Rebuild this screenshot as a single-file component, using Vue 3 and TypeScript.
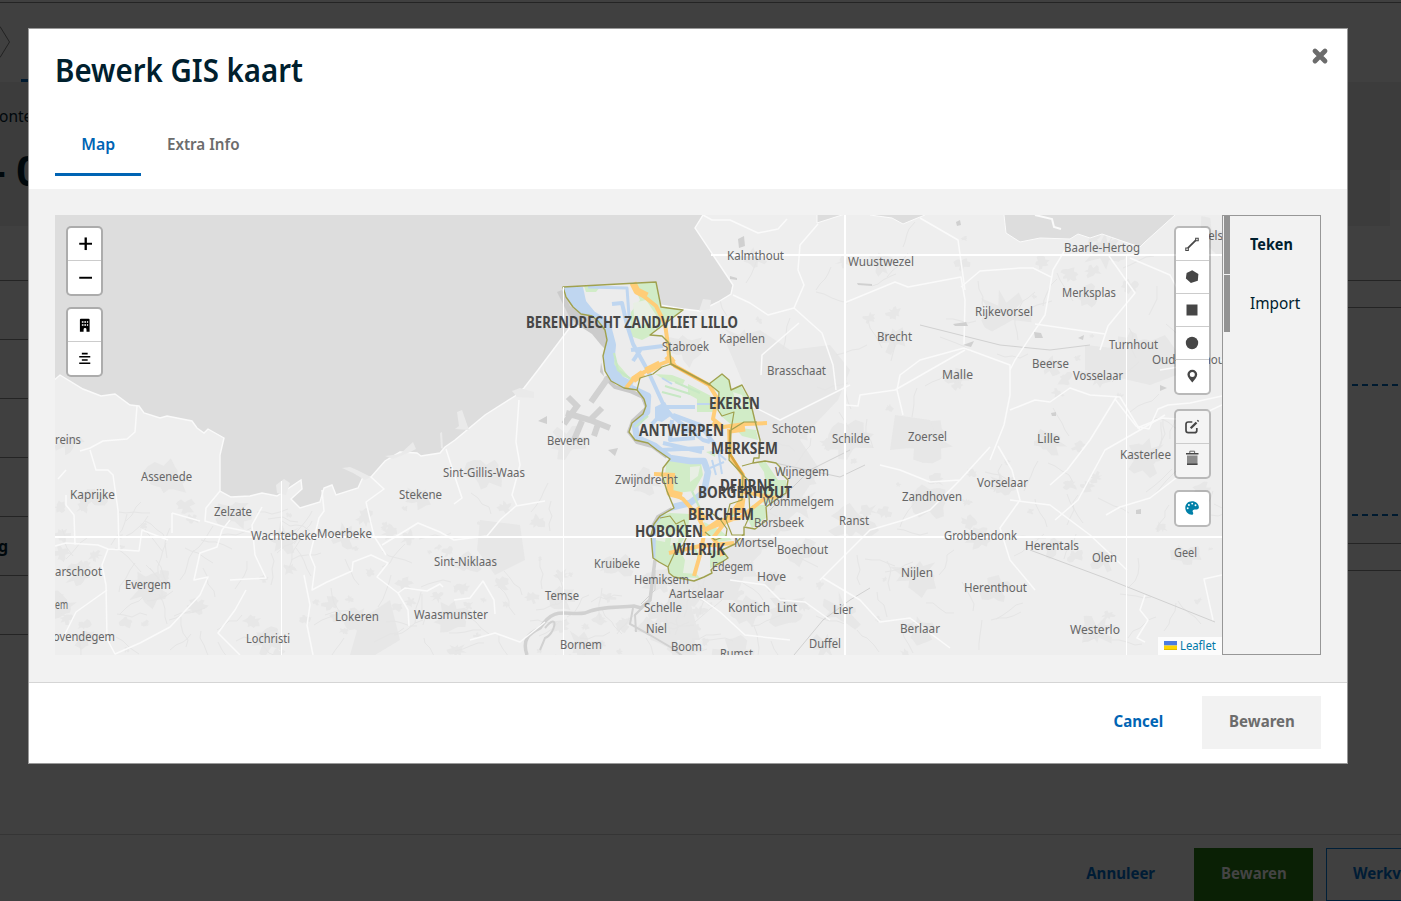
<script setup lang="ts">
interface MapLabel { name: string; x: number; y: number; w: number }

const parseLabels = (source: string): MapLabel[] =>
  source.split(';').map((entry) => {
    const [name, x, y, w] = entry.trim().split('|')
    return { name, x: Number(x), y: Number(y), w: Number(w) }
  })

const towns = parseLabels(`Kalmthout|727|260|57;Wuustwezel|848|266|66;Baarle-Hertog|1064|252|76;Merksplas|1062|297|54;
Rijkevorsel|975|316|58;Brecht|877|341|35;Kapellen|719|343|46;Stabroek|662|351|47;Brasschaat|767|375|59;Malle|942|379|31;
Beerse|1032|368|37;Vosselaar|1073|380|50;Turnhout|1109|349|49;Oud-Turnhout|1152|364|77;Schoten|772|433|44;Schilde|832|443|38;
Zoersel|908|441|39;Lille|1037|443|23;Kasterlee|1120|459|51;Geel|1174|557|23;Ravels|1189|240|34;Beveren|547|445|43;
Zwijndrecht|615|484|63;Wijnegem|775|476|54;Wommelgem|763|506|71;Borsbeek|754|527|50;Ranst|839|525|30;Mortsel|734|547|43;
Boechout|777|554|51;Edegem|712|571|41;Hove|757|581|29;Kruibeke|594|568|46;Hemiksem|634|584|55;Aartselaar|669|598|55;
Temse|545|600|34;Schelle|644|612|38;Kontich|728|612|42;Lint|777|612|20;Lier|833|614|20;Niel|646|633|21;Boom|671|651|31;
Bornem|560|649|42;Rumst|720|658|33;Duffel|809|648|32;Sint-Gillis-Waas|443|477|82;Stekene|399|499|43;Assenede|141|481|51;
Kaprijke|70|499|45;Zelzate|214|516|38;Wachtebeke|251|540|66;Moerbeke|317|538|55;Sint-Niklaas|434|566|63;reins|55|444|26;
arschoot|55|576|47;Evergem|125|589|46;em|55|609|13;ovendegem|53|641|62;Lokeren|335|621|44;Lochristi|246|643|44;
Waasmunster|414|619|74;Vorselaar|977|487|51;Zandhoven|902|501|60;Grobbendonk|944|540|73;Herentals|1025|550|54;Olen|1092|562|25;
Nijlen|901|577|32;Herenthout|964|592|63;Berlaar|900|633|40;Westerlo|1070|634|50`)

const districts = parseLabels(`BERENDRECHT ZANDVLIET LILLO|526|328|212;EKEREN|709|409|51;ANTWERPEN|639|436|85;MERKSEM|711|454|67;
DEURNE|720|491|55;BORGERHOUT|698|498|94;BERCHEM|688|520|66;HOBOKEN|635|537|68;WILRIJK|673|555|52`)

// Small deterministic generator so built-up areas look irregular but stable.
let seed = 17
const rnd = (): number => {
  seed = (seed * 16807) % 2147483647
  return seed / 2147483647
}
const blob = (cx: number, cy: number, r: number): string => {
  const pts: string[] = []
  for (let i = 0; i < 18; i++) {
    const a = (i / 18) * Math.PI * 2
    const d = r * (0.35 + rnd() * 0.8)
    pts.push(`${(cx + Math.cos(a) * d * 1.2).toFixed(1)},${(cy + Math.sin(a) * d).toFixed(1)}`)
  }
  return pts.join(' ')
}
const builtUp: string[] = towns.map((t) => blob(t.x + t.w / 2, t.y - 2, 10 + rnd() * 12))
for (let i = 0; i < 150; i++) {
  const x = 60 + rnd() * 1160
  const coast = x < 560 ? 500 : x < 720 ? 560 : 235
  builtUp.push(blob(x, coast + rnd() * (655 - coast), 2 + rnd() * 7))
}
const lanes: string[] = []
for (let i = 0; i < 190; i++) {
  let x = 60 + rnd() * 1160
  const coast = x < 560 ? 500 : x < 720 ? 590 : 225
  let y = coast + rnd() * (655 - coast)
  let d = `M${x.toFixed(0)} ${y.toFixed(0)}`
  const a = rnd() * 6.28
  for (let k = 0; k < 4; k++) {
    x += Math.cos(a + rnd() * 0.9) * 8
    y += Math.sin(a + rnd() * 0.9) * 8
    d += `L${x.toFixed(0)} ${y.toFixed(0)}`
  }
  lanes.push(d)
}

const sea = 'M45 205H703V215L695 228 715 258 733 285 731 294 718 302 700 311 683 309 660 305 640 320 590 325 571 326 538 370 524 388 515 396 485 415 455 440 445 447 440 453 421 456 417 453 400 452 385 461 371 477 363 477 358 488 336 495 332 485 324 488 320 502 300 508 291 499 302 489 301 480 277 496 262 493 250 496 231 497 220 491 220 455 224 438 208 429 204 433 197 428 192 421 167 416 160 418 144 413 139 406 130 405 115 394 101 396 83 389 60 375 45 388Z'
const roads = [
  'M137 406L135 432 127 439 103 441 90 448 80 451M90 450L96 470 108 470 113 475 118 510 119 550M66 470L58 479M66 495L66 505 74 515 75 545M55 546L66 543 98 545 108 549 139 551 142 530 168 540M108 549L102 565 106 585 107 639 115 654 140 643 170 627 200 595 208 577 194 580 200 553 217 547 222 530 230 520',
  'M107 590L76 612 65 634M172 513V533M172 513L200 521M220 491L206 508 205 521 225 527 250 532M262 507L252 525 255 555 266 578 230 580M322 490L324 511 319 518 310 555 315 567 312 590 327 582 352 571 353 562 371 555 388 563 377 577 398 593 408 610 409 626',
  'M371 477L384 489 366 502 374 536 386 555M382 545L418 523 440 532 454 540 487 536 501 519 516 506 545 501M519 400L516 442 520 465 512 495 517 506M446 449L454 474 462 498 454 504M398 593L405 588 427 591 440 584 443 587M454 600L470 598 483 581 494 600 495 614M304 575L310 605 307 625 313 655',
  'M733 295L750 303 768 315 794 308 822 333 833 365 836 390M844 303L895 282 908 287 961 277 965 300 964 345M703 215L712 220 730 220 758 233 778 229 787 219M818 224L800 245 798 270 804 285 794 308M799 323L762 355 761 375M920 218L958 240 965 290M961 287L980 271 1020 268 1033 268 1051 277',
  'M1065 250L1053 270 1045 315 1015 360 1010 370M1035 324L1105 334M964 348L1010 365 1010 395 1004 425 990 460M964 348L920 360 900 375 897 390 903 415M965 350L895 390 860 395 858 406 845 405M1109 256L1135 293 1108 326 1100 350M1130 258L1170 275 1178 290M1010 410L1035 400 1050 402 1070 388 1090 395 1120 397 1140 430 1165 415',
  'M1117 396L1090 440 1067 470 1050 485M1140 430L1105 450 1078 500 1055 520M990 447L960 480 930 482 900 470 880 465M998 446L1012 470 1020 500 1000 528 1010 560 1035 590M960 480L930 510 904 520 870 530 840 560 820 580M1222 405L1190 420 1162 418 1137 428M1222 360L1160 370',
  'M1115 399L1136 426 1149 429 1158 409 1168 405 1190 403 1222 396M1106 515L1120 507 1150 498 1176 478M1145 595L1140 610 1148 620 1137 638 1145 642M1222 575L1204 579 1213 620M823 578L860 600 880 622 910 618 950 648M730 580L765 585 780 600 805 602 830 620M690 590L720 612 745 635 790 640M630 340L720 390 780 420 850 385M470 640L495 633 520 642 545 622M240 655L218 633 235 610 246 590M1010 500L1050 505 1090 535 1127 570',
]
const riverBank = 'M563 287L566 297 573 307 581 314 592 316 598 321 605 330 607 340 603 356 605 371 611 381 624 388 637 390 644 399 646 406 643 414 632 423 629 432 635 440 648 443 657 450 670 459 663 468 662 475 667 491 674 508 660 516 654 524 651 535 653 558 659 562 668 567 669 573 674 577 684 579 694 581 704 577 712 573 711 570 716 565 722 562 728 558 722 550 735 544 744 534 744 527 755 529 767 520 766 507 778 498 786 493 788 480 782 474 780 467 776 463 765 461 753 463 754 458 759 458 760 440 755 421 750 400 742 385 731 390 729 380 722 374 709 384 671 364 669 344 668 342 662 336 650 335 671 319 683 310 668 308 661 307 656 282 600 285Z'
const borders = 'M637 390L640 378 653 374 662 367 671 364M709 384L719 392 718 410 722 416 734 412 731 430 744 422 757 422M731 430L729 460 743 475 742 500 730 504 726 520 732 535 745 535M742 466L753 463M743 475L750 482 749 496 750 515 745 526M660 518L670 516 676 524 684 520 688 534 683 545 675 552 668 567M705 532L715 540 726 536 727 529 720 519 710 512'
const fieldLines = [0, 1, 2, 3, 4, 5, 6]
</script>

<template>
  <div class="screen">
    <div class="page">
      <div class="steps">
        <svg class="chevron" viewBox="0 0 12 32"><path d="M0 .5L9.5 16 0 31.5" /></svg>
        <span class="step-mark"></span>
      </div>
      <div class="page-head">
        <div class="crumb">onte</div>
        <div class="page-title">- 0</div>
        <div class="head-tab"></div>
      </div>
      <div class="page-body">
        <div class="left-rows">
          <div v-for="n in fieldLines" :key="n" class="row"><b v-if="n === 5">g</b></div>
        </div>
        <div class="right-rows">
          <div class="cell first"></div>
          <div class="cell thin"></div>
          <div class="cell drop"></div>
          <div class="cell drop-two"></div>
          <div class="cell gap"></div>
          <div class="cell thin"></div>
        </div>
      </div>
      <div class="page-foot">
        <span class="link"><span class="cond">Annuleer</span></span>
        <span class="green"><span class="cond">Bewaren</span></span>
        <span class="outline"><span class="cond">Werkvoorraad</span></span>
      </div>
    </div>

    <section class="modal">
      <header class="head">
        <div class="title-row">
          <h1><span class="cond">Bewerk GIS kaart</span></h1>
          <svg class="close" viewBox="0 0 18 18"><path d="M4 4l10 10M14 4L4 14" /></svg>
        </div>
        <nav class="tabs">
          <a class="tab active"><span class="cond">Map</span></a>
          <a class="tab"><span class="cond">Extra Info</span></a>
        </nav>
      </header>

      <div class="body">
        <div class="map">
          <svg class="canvas" viewBox="55 215 1167 440">
            <defs><clipPath id="city"><path :d="riverBank" /></clipPath></defs>
            <rect x="55" y="215" width="1167" height="440" fill="#eee" />
            <g fill="#e7e7e7">
              <polygon v-for="(p, i) in builtUp" :key="i" :points="p" />
              <path d="M725 340L760 330 790 350 830 345 850 370 838 400 800 440 820 470 800 500 750 560 735 600 690 600 700 640 660 640 670 590 730 540 760 500 750 400ZM480 520L520 525 525 560 495 575 477 550ZM360 620L390 600 400 640 375 655H350ZM1085 345L1130 350 1165 335 1190 370 1150 385 1085 370ZM895 415L930 420 940 445 890 450Z" />
            </g>
            <path v-for="(d, i) in lanes" :key="'l' + i" :d="d" fill="none" stroke="#e5e5e5" stroke-width="1" />
            <path :d="sea" fill="#ddd" stroke="#fafafa" stroke-width="1.4" />
            <path d="M817 205V223L845 214V205ZM870 205V215L892 218 903 224 915 219 925 215V205ZM1004 205V215L1006 233 1020 242 1040 238 1070 239 1078 234 1090 238 1102 234 1125 242 1140 247 1145 242 1175 215V205Z" fill="#ddd" stroke="#fafafa" />
            <path d="M1035 215L1052 219 1054 227 1061 229" fill="none" stroke="#fafafa" stroke-width="2" />
            <path d="M342 468L350 467 357 470 371 477 365 480 353 473ZM385 456L400 454 413 442 416 449 408 453 393 459ZM441 448L440 433 442 432 443 449ZM457 412L462 410 469 430 455 429 459 426ZM512 391L520 388 534 392 534 398 517 397ZM276 485L284 479 290 483 286 495 277 493ZM699 311L703 299 711 300 710 309Z" fill="#eaeaea" />
            <path d="M557 292L562 290 570 306 582 315 600 320 607 332 606 350 601 345 592 334 578 325 570 318ZM603 345L601 362 604 376 613 386 600 372ZM637 390L648 397 655 408 645 418 636 422 646 408Z" fill="#cbcbcb" />
            <path d="M605 377L615 387 630 391 643 397 647 408 633 421 629 432 637 442 652 446 667 457M672 509L658 517 652 528" fill="none" stroke="#c9c9c9" stroke-width="4" />
            <g fill="none" stroke="#d1d1d1">
              <path d="M608 378L591 402M566 413L590 420 610 428M582 421L574 440M568 397L577 406 564 424M590 420L602 408M598 424L594 436" stroke-width="6" />
              <path d="M527 655C522 640 528 634 540 628 555 605 565 616 585 613 600 606 620 608 634 606L641 608 650 600 655 560" stroke-width="3.5" />
              <path d="M633 608L630 624 650 635 672 648 685 658M642 608L635 615 636 632M545 628C560 610 555 635 545 638L540 650" stroke-width="2" />
              <path d="M655 570V590L641 604M794 655L823 620 850 600 870 588M1030 550L1105 578 1215 622M920 325L1000 345 1050 350 1090 345M770 510L810 470 850 450M775 463L840 477 865 465" stroke-width="1" />
            </g>
            <g fill="none" stroke="#fafafa" stroke-width="1.5" stroke-linejoin="round">
              <path v-for="d in roads" :key="d" :d="d" />
            </g>
            <path d="M738 239L744 236 745 246 739 248ZM730 276L737 278 737 280 730 279ZM956 222L960 220 961 225 957 226ZM857 283L872 284 872 286 858 285ZM953 324L966 322 968 326 955 326ZM963 345L974 341 971 347ZM1034 332L1041 333 1043 338 1035 338ZM1051 413L1056 412 1056 416 1052 416ZM1160 385L1167 388 1160 391ZM538 421L547 416 547 424ZM608 450L618 448 615 456ZM1136 510L1141 509 1141 514 1136 514ZM1078 338L1084 335 1083 340Z" fill="#d0d0d0" />

            <path :d="riverBank" fill="#ececec" />
            <g clip-path="url(#city)">
              <g fill="#d1ecc7">
                <path d="M632 281L658 281 663 306 690 308 665 325 652 335 642 340 630 336 631 312 640 300Z" />
                <path d="M584 286L600 287 596 292 586 292ZM605 350L618 364 630 378 612 376ZM655 374L672 375 685 380 683 384 665 380ZM688 384L711 396 716 412 697 412 697 399 688 394ZM709 384L722 372 740 384 755 410 758 422 735 428 720 415 719 394Z" />
                <path d="M667 459L701 463 703 475 694 491 676 493 664 482ZM651 518L670 513 690 514 687 534 678 548 688 565 700 578 670 577 651 555ZM758 463L765 461 778 480 786 480 787 491 765 505 757 494 766 486 764 472ZM752 505L765 505 766 518 752 528 748 520ZM704 522L720 530 732 540 718 542 706 536ZM710 550L728 552 724 562 710 568ZM734 427L756 430 758 440 742 436ZM706 452L716 450 715 457Z" />
              </g>
              <g fill="#e8efe4"><path d="M633 303L646 300 656 315 656 330 648 323 635 329ZM690 467L700 466 698 476 690 482ZM655 530L667 528 665 542 655 540ZM672 532L680 530 678 542 670 546ZM685 560L697 560 698 574 683 573ZM733 392L742 395 746 408 737 405Z" /></g>
              <g fill="none" stroke="#bfd6f0" stroke-linejoin="round">
                <path d="M570 287L576 300 590 317 604 326 609 345 607 366 618 382 631 388" stroke-width="14" />
                <path d="M631 388L648 396 647 412 635 426 637 438 655 446 670 458 690 461 704 461 708 472 704 492 690 503 665 509 653 523 652 560" stroke-width="6.5" />
                <path d="M588 287L627 288 629 316" stroke-width="3" />
                <path d="M612 304L622 303 627 325 633 344 648 371 665 408 673 417 703 440 710 442M631 350L663 346M633 361L641 349M664 407L695 407M665 410L652 424M672 420L670 440 695 438M681 432L697 430M663 443L702 452M673 415L700 425 715 445M660 450L704 448" stroke-width="4" />
                <path d="M712 448L726 460M712 460L716 475M718 450L722 474M710 453L724 450M710 468L724 462M697 404L718 404M662 378L672 384" stroke-width="2" />
              </g>
              <path d="M562 286L583 287 589 315 574 310Z" fill="#bfd6f0" /><path d="M655 407L665 402 672 415 662 422 655 420Z" fill="#bfd6f0" />
              <g fill="none" stroke="#c7e8c4" stroke-width="2.2"><path d="M665 386L690 394M675 382L700 393M662 392L681 397M614 353L618 370 632 380M635 427L648 416M692 491L705 520M693 545L699 558M725 520L742 510" /></g>
            </g>
            <g fill="none" stroke="#ffcd78" stroke-linejoin="round">
              <path d="M634 288L646 298 656 306 665 324 667 338 669 356 675 366 709 385 717 398 713 419 723 427 745 424 767 423M674 359L653 367 634 378 626 388M729 429L730 456 743 475 741 500 726 521 713 538 718 545 722 556M654 474L675 475M669 475V491L683 499 697 515 705 530 700 555 694 576M705 530L720 520 740 518 765 498M702 532L710 528 736 518M669 553L700 546 734 543M744 492L776 498" stroke-width="4" />
              <path d="M633 283L637 291 647 296M667 356L673 363M633 380L643 373M646 371L660 364M713 422L722 429M730 430L745 428M670 477V493L682 496M696 508L704 520M742 498L740 513" stroke-width="7" />
            </g>
            <path d="M671 364L710 385M730 430L730 454 743 475" fill="none" stroke="#d7a33e" stroke-width="2.5" />
            <path :d="riverBank" fill="none" stroke="#a0a14f" stroke-width="1.4" stroke-linejoin="round" />
            <path :d="borders" fill="none" stroke="#a0a14f" stroke-width="1.2" stroke-linejoin="round" />

            <g stroke="#fff" fill="none">
              <path d="M563.500 287V655M281.500 481V655M1126.500 256V655" stroke-width="1" />
              <path d="M845 215V655M55 537H1222M711 255H1222" stroke-width="2" />
            </g>
            <g class="towns">
              <text v-for="t in towns" :key="t.name" :x="t.x" :y="t.y" :textLength="t.w" lengthAdjust="spacingAndGlyphs">{{ t.name }}</text>
            </g>
            <g class="districts">
              <text v-for="t in districts" :key="t.name" :x="t.x" :y="t.y" :textLength="t.w" lengthAdjust="spacingAndGlyphs">{{ t.name }}</text>
            </g>
          </svg>

          <div class="controls left">
            <div class="bar">
              <a><svg viewBox="0 0 16 16"><path d="M9 1.500V14.500" stroke="#000" stroke-width="2.400" /><path d="M2.300 8H15.700" stroke="#000" stroke-width="2" /></svg></a>
              <a><svg viewBox="0 0 16 16"><path d="M2.300 8H15.700" stroke="#000" stroke-width="2" /></svg></a>
            </div>
            <div class="bar">
              <a><svg viewBox="0 0 16 16"><path d="M4 1.800h8q1 0 1 1v12.400H9.800v-2.400q0-1.400-1.500-1.400t-1.500 1.400v2.400H3V2.800q0-1 1-1z" /><path d="M5 4.400h1.700v1.500H5zM7.600 4.400h1.700v1.500H7.600zM10.200 4.400h1.300v1.500h-1.300zM5 7.600h1.700v1.500H5zM7.600 7.600h1.700v1.500H7.600zM10.200 7.600h1.300v1.500h-1.300z" fill="#fff" /></svg></a>
              <a><svg viewBox="0 0 16 16"><path d="M5 2.700h6M2.300 6h11.400M5 9.300h6M2.300 12.600h11.400" stroke="#000" stroke-width="1.600" /></svg></a>
            </div>
          </div>

          <div class="controls right">
            <div class="bar draw">
              <a><svg viewBox="0 0 16 16" fill="none" stroke="#464646"><path d="M3.800 12.200l8.600-8.600" stroke-width="1.800" /><path d="M1.800 12h2.500v2.500H1.800zM11.700 2.200h2.500v2.500h-2.500z" fill="#fff" stroke-width="1.100" /></svg></a>
              <a><svg viewBox="0 0 16 16" fill="#464646"><path d="M8.200 1.300L14.400 5l-.6 6.800-6.900 2.200L1.900 9.400 2.600 4z" /></svg></a>
              <a><svg viewBox="0 0 16 16" fill="#464646"><path d="M2.500 2.500h11v11h-11z" /></svg></a>
              <a><svg viewBox="0 0 16 16" fill="#464646"><circle cx="8" cy="8" r="6.200" /></svg></a>
              <a><svg viewBox="0 0 16 16" fill="#464646"><path fill-rule="evenodd" d="M8.300 1.700a4.900 4.900 0 0 1 4.900 4.900c0 2.800-2.700 5.200-4.900 8-2.100-2.800-4.900-5.200-4.900-8A4.900 4.900 0 0 1 8.300 1.700zm0 2.400a2.500 2.500 0 1 0 0 5 2.500 2.500 0 0 0 0-5z" /></svg></a>
            </div>
            <div class="bar edit">
              <a><svg viewBox="0 0 16 16" fill="none" stroke="#464646"><path d="M8.300 3H4.300Q2 3 2 5.300v6Q2 13.700 4.300 13.700h6.200q2.300 0 2.300-2.300V9" stroke-width="1.700" /><path d="M6.700 9.300l5.800-5.800" stroke-width="2.300" /><path d="M13.500 2.400l1-1" stroke-width="2" /></svg></a>
              <a class="bin"><svg viewBox="0 0 16 16"><path d="M3 5.500h10.500V14.500H3z" fill="#8b8b8b" /><path d="M2 3.800h12.500M3 14.300h10.500" stroke="#464646" stroke-width="1.400" /><path d="M5.800 3V1.200h4.800V3" fill="none" stroke="#666" /></svg></a>
            </div>
            <div class="bar palette">
              <a><svg viewBox="0 0 16 16"><path d="M8 1.300C4 1.300 1.300 4.200 1.300 8c0 3.700 3 6.700 6.400 6.700 1.500 0 1.900-1.200 1.200-2.400-.8-1.500.2-2.900 1.800-2.900h2c1.300 0 2.200-.7 2.200-1.800C14.900 4 11.800 1.300 8 1.300z" fill="#0080a8" /><g fill="#fff"><circle cx="3.700" cy="8.300" r=".95" /><circle cx="4.900" cy="5" r=".95" /><circle cx="8.200" cy="3.600" r=".95" /><circle cx="11.500" cy="5.200" r=".95" /></g></svg></a>
            </div>
          </div>

          <div class="attribution"><svg viewBox="0 0 13 9"><path fill="#4c7be1" d="M0 0h13v4.500H0z" /><path fill="#ffd500" d="M0 4.500h13V8H0z" /><path fill="#e0bc00" d="M0 8h13v1H0z" /></svg><span class="cond">Leaflet</span></div>
        </div>
        <aside class="side">
          <a class="on"><span class="cond">Teken</span></a>
          <a><span class="cond import">Import</span></a>
        </aside>
      </div>

      <footer class="foot">
        <span class="cancel"><span class="cond">Cancel</span></span>
        <span class="save"><span class="cond">Bewaren</span></span>
      </footer>
    </section>
  </div>
</template>

<style>
body { margin: 0; overflow: hidden; }
</style>

<style scoped>
.screen { position: relative; width: 1401px; height: 901px; overflow: hidden; background: #404040; color: #00080c; font: 16px "Noto Sans", "Open Sans", sans-serif; }
.screen * { box-sizing: border-box; }
.cond { display: inline-block; white-space: nowrap; transform: scaleX(.94); }
.page { display: flex; flex-direction: column; height: 901px; }
.steps { height: 82px; padding-top: 26px; background: linear-gradient(#404040 2px, #242424 2px, #242424 3px, #404040 3px); display: flex; align-items: flex-start; }
.chevron { width: 12px; height: 32px; fill: none; stroke: #222; }
.step-mark { width: 30px; height: 3px; margin: 53px 0 0 9px; background: #001a2f; }
.page-head { position: relative; height: 144px; background: #3c3c3c; padding-top: 22px; }
.crumb { margin-left: -1px; font-size: 15.5px; line-height: 24px; }
.page-title { width: 60px; margin: 14px 0 0 -8px; font-size: 42px; line-height: 56px; font-weight: 700; white-space: nowrap; }
.head-tab { position: absolute; right: 0; bottom: 0; width: 11px; height: 56px; background: #404040; }
.page-body { display: flex; justify-content: space-between; height: 608px; }
.left-rows { width: 28px; }
.row { height: 59px; border-bottom: 1px solid #242424; padding-top: 18px; line-height: 22px; }
.row:first-child { height: 55px; }
.row b { margin-left: -2px; }
.right-rows { width: 53px; }
.cell { border-bottom: 1px solid #242424; }
.first { height: 55px; }
.thin { height: 27px; }
.drop, .drop-two { border: 0; margin-left: 4px; background: repeating-linear-gradient(90deg, #001a2f 0 6px, transparent 6px 10px) bottom / 100% 2px no-repeat; }
.drop { height: 78px; }
.drop-two { height: 130px; }
.gap { height: 28px; }
.page-foot { display: flex; height: 67px; border-top: 1px solid #353535; padding-top: 13px; font-weight: 700; line-height: 50px; }
.page-foot > span { flex: none; }
.link { width: 108px; margin-left: 1067px; text-align: center; color: #001c35; }
.green { width: 119px; height: 53px; margin-left: 19px; background: #0a2005; color: #444; text-align: center; }
.outline { width: 160px; height: 53px; margin-left: 13px; padding-left: 26px; border: 1px solid #001f38; color: #001c35; line-height: 48px; }
.outline .cond { transform-origin: left; }

.modal { position: absolute; left: 28px; top: 28px; width: 1320px; height: 736px; display: flex; flex-direction: column; background: #fff; border: 1px solid #999; color: #00202e; }
.head { height: 160px; padding: 0 26px; }
.title-row { display: flex; justify-content: space-between; height: 84px; }
h1 { margin: 19px 0 0 0; font-size: 32px; line-height: 44px; font-weight: 600; }
h1 .cond { transform-origin: left; transform: scaleX(.92); }
.close { width: 18px; height: 18px; margin: 18px -8px 0 0; stroke: #6c6c6c; stroke-width: 4.8; stroke-linecap: round; }
.tabs { display: flex; height: 63px; }
.tab { width: 86px; text-align: center; font-weight: 600; line-height: 62px; color: #6c6c6c; }
.tab .cond { transform: scaleX(.95); }
.tab + .tab { width: 125px; }
.tab.active { color: #0064b4; border-bottom: 3px solid #0064b4; }
.tab.active .cond { transform: scaleX(.99); }
.body { display: flex; height: 493px; padding: 26px; background: #f2f2f2; }
.map { position: relative; width: 1167px; height: 440px; overflow: hidden; }
.canvas { display: block; width: 1167px; height: 440px; }
.towns { font-size: 12.5px; fill: #666; }
.districts { font-size: 15.5px; font-weight: 700; fill: #464646; }
.controls { position: absolute; top: 11px; display: flex; flex-direction: column; gap: 11px; }
.controls.left { left: 11px; }
.controls.right { right: 11px; }
.bar { width: 37px; border: 2px solid rgba(0, 0, 0, .22); border-radius: 5px; background: #fff; background-clip: padding-box; }
.bar a { display: flex; align-items: center; justify-content: center; height: 33px; border-bottom: 1px solid #ccc; }
.bar a:last-child { border-bottom: 0; }
.bar svg { width: 16px; height: 16px; }
.left .bar svg { width: 15.5px; height: 15.5px; }
.right .bar a { padding: 0 1px 1px 0; }
.edit { margin-top: 3px; background-color: #f4f4f4; }
.right .edit .bin { padding-bottom: 5px; }
.attribution { position: absolute; right: 0; bottom: 0; display: flex; align-items: center; width: 64px; height: 18px; padding-left: 6px; background: rgba(255, 255, 255, .8); color: #0078a8; font-size: 12px; }
.attribution svg { width: 13px; height: 9px; margin: 0 3px 1px 0; flex: none; }
.attribution .cond { transform-origin: left; margin-bottom: 2px; }
.side { width: 99px; height: 440px; padding-left: 1px; border: 1px solid #979797; }
.side a { display: block; height: 58px; margin-bottom: 1px; padding-left: 20px; border-left: 6px solid #939393; line-height: 57px; }
.side a + a { height: 57px; }
.side .cond { transform-origin: left; transform: scaleX(.9); }
.side .import { transform: scaleX(.96); }
.on { font-weight: 700; }
.foot { display: flex; justify-content: flex-end; height: 81px; padding: 13px 26px; border-top: 1px solid #d5d5d5; font-weight: 700; line-height: 50px; }
.cancel { width: 88px; margin-right: 20px; text-align: center; color: #0064b4; }
.save { width: 119px; height: 53px; background: #f2f2f2; color: #6c6c6c; text-align: center; }
</style>
